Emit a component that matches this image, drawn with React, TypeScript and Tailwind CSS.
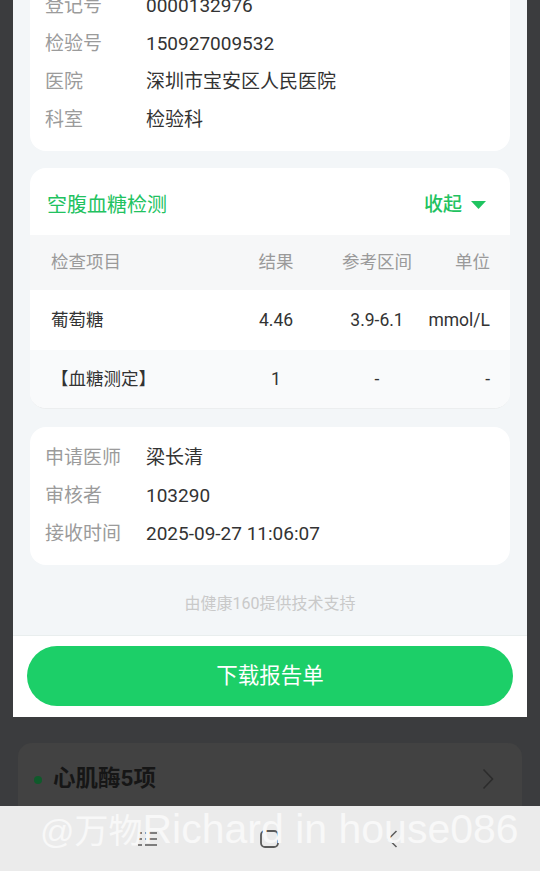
import React from "react";

const InfoRow = ({ label, value }: { label: string; value: string }) => (
  <div className="flex items-center h-[38px] text-[19px] leading-[38px]">
    <div className="w-[101px] shrink-0 text-[#9b9b9b]">{label}</div>
    <div className="text-[#333333] whitespace-nowrap">{value}</div>
  </div>
);

const TableRow = ({
  cells,
  className,
  textClass,
}: {
  cells: string[];
  className: string;
  textClass: string;
}) => (
  <div className={`flex items-center pl-[21px] pr-[20px] text-[17.5px] ${className} ${textClass}`}>
    <div className="w-[185px] shrink-0 whitespace-nowrap">{cells[0]}</div>
    <div className="w-[80px] shrink-0 text-center whitespace-nowrap">{cells[1]}</div>
    <div className="w-[100px] ml-[11px] shrink-0 text-center whitespace-nowrap">{cells[2]}</div>
    <div className="flex-1 text-right whitespace-nowrap">{cells[3]}</div>
  </div>
);

export default function App() {
  return (
    <div className="relative w-[540px] h-[871px] overflow-hidden bg-[#3b3c3e] flex flex-col font-['Roboto','Noto_Sans_CJK_SC',sans-serif]">
      {/* modal panel */}
      <div className="mx-[13px] -mt-[25px] h-[742px] shrink-0 bg-[#f3f6f8] flex flex-col">
        <div className="px-[17px] flex flex-col">
          {/* card 1 */}
          <div className="bg-white rounded-[16px] pt-[12px] pb-[12px] pl-[15px]">
            <InfoRow label="登记号" value="0000132976" />
            <InfoRow label="检验号" value="150927009532" />
            <InfoRow label="医院" value="深圳市宝安区人民医院" />
            <InfoRow label="科室" value="检验科" />
          </div>

          {/* card 2 */}
          <div className="mt-[17px] bg-white rounded-[16px] overflow-hidden border-b border-[#eceeef]">
            <div className="h-[67px] pt-[7px] flex items-center justify-between pl-[17px] pr-[24px]">
              <div className="text-[20px] text-[#22c25f]">空腹血糖检测</div>
              <div className="flex items-center gap-[9px]">
                <span className="text-[19px] font-medium text-[#22c25f]">收起</span>
                <svg width="15" height="8" viewBox="0 0 15 8" className="mt-[-1px]">
                  <path d="M0 0 H15 L7.5 8 Z" fill="#1fc460" />
                </svg>
              </div>
            </div>
            <TableRow
              cells={["检查项目", "结果", "参考区间", "单位"]}
              className="h-[55px] bg-[#f6f7f8]"
              textClass="text-[#9a9a9a]"
            />
            <TableRow
              cells={["葡萄糖", "4.46", "3.9-6.1", "mmol/L"]}
              className="h-[60px] bg-white"
              textClass="text-[#333333]"
            />
            <TableRow
              cells={["【血糖测定】", "1", "-", "-"]}
              className="h-[58px] bg-[#f9fafb]"
              textClass="text-[#333333]"
            />
          </div>

          {/* card 3 */}
          <div className="mt-[18px] bg-white rounded-[16px] pt-[12px] pb-[12px] pl-[15px]">
            <InfoRow label="申请医师" value="梁长清" />
            <InfoRow label="审核者" value="103290" />
            <InfoRow label="接收时间" value="2025-09-27 11:06:07" />
          </div>

          <div className="h-[70px] pt-[7px] flex items-center justify-center text-[16px] text-[#c9c9c9]">
            由健康160提供技术支持
          </div>
        </div>

        <div className="border-t border-[#e9eeee] bg-white h-[82px] pt-[10px] px-[14px]">
          <div className="h-[60px] rounded-full bg-[#1ccf68] flex items-center justify-center text-white text-[21.5px]">
            下载报告单
          </div>
        </div>
      </div>

      {/* dimmed page behind */}
      <div className="h-[89px] shrink-0 overflow-hidden pt-[26px] px-[18px]">
        <div className="h-[90px] rounded-[14px] bg-[#424242] flex items-start pt-[20px] pl-[16px] pr-[28px]">
          <div className="h-[30px] flex items-center flex-1">
            <span className="w-[8px] h-[8px] rounded-full bg-[#0f5a2b] mt-[3px]" />
            <span className="ml-[11px] text-[22.5px] font-bold text-[#161616] leading-[30px]">心肌酶5项</span>
          </div>
          <svg width="12" height="22" viewBox="0 0 12 22" className="mt-[5px]">
            <path d="M1.5 1.5 L10.5 11 L1.5 20.5" fill="none" stroke="#2c2c2c" strokeWidth="1.6" />
          </svg>
        </div>
      </div>

      {/* system nav bar */}
      <div className="relative h-[65px] shrink-0 bg-[#ebebeb] flex items-center pl-[138px]">
        <svg width="20" height="16" viewBox="0 0 20 16" className="shrink-0">
          <g stroke="#5a5a5a" strokeWidth="1.6">
            <path d="M0 2 H4 M7 2 H19" />
            <path d="M0 8 H4 M7 8 H19" />
            <path d="M0 14 H4 M7 14 H19" />
          </g>
        </svg>
        <svg width="19" height="18" viewBox="0 0 19 18" className="ml-[102px] shrink-0">
          <rect x="1" y="1" width="17" height="16" rx="4" fill="none" stroke="#5a5a5a" strokeWidth="1.8" />
        </svg>
        <svg width="11" height="18" viewBox="0 0 11 18" className="ml-[108px] shrink-0">
          <path d="M9.5 1 L1.5 9 L9.5 17" fill="none" stroke="#5a5a5a" strokeWidth="1.5" />
        </svg>

        <div className="absolute left-[40px] top-[3px] whitespace-nowrap leading-none text-[#f8f8f8] font-['Liberation_Sans','Noto_Sans_CJK_SC',sans-serif] pointer-events-none">
          <span className="text-[34px]">@万物</span>
          <span className="text-[41px]">Richard in house086</span>
        </div>
      </div>
    </div>
  );
}
